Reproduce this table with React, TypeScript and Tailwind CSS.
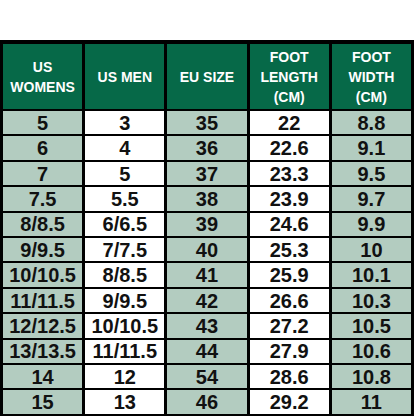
const headers = [
  ['US', 'WOMENS'],
  ['US MEN'],
  ['EU SIZE'],
  ['FOOT', 'LENGTH', '(CM)'],
  ['FOOT', 'WIDTH', '(CM)'],
];

const rows = [
  ['5', '3', '35', '22', '8.8'],
  ['6', '4', '36', '22.6', '9.1'],
  ['7', '5', '37', '23.3', '9.5'],
  ['7.5', '5.5', '38', '23.9', '9.7'],
  ['8/8.5', '6/6.5', '39', '24.6', '9.9'],
  ['9/9.5', '7/7.5', '40', '25.3', '10'],
  ['10/10.5', '8/8.5', '41', '25.9', '10.1'],
  ['11/11.5', '9/9.5', '42', '26.6', '10.3'],
  ['12/12.5', '10/10.5', '43', '27.2', '10.5'],
  ['13/13.5', '11/11.5', '44', '27.9', '10.6'],
  ['14', '12', '54', '28.6', '10.8'],
  ['15', '13', '46', '29.2', '11'],
];

export default function App() {
  return (
    <div className="w-[416px] h-[416px] bg-white overflow-hidden font-['Liberation_Sans',Arial,sans-serif]">
      <div className="mt-[40px] w-[414px] bg-black pt-[4px] pb-[2px] px-[3px]">
        <div className="grid grid-cols-5 gap-x-[3px] gap-y-[2px] grid-rows-[65px_repeat(12,23.42px)]">
          {headers.map((lines, i) => (
            <div
              key={i}
              className="bg-[#066948] text-white font-bold text-[14px] leading-[20px] flex flex-col items-center justify-center text-center"
            >
              {lines.map((l) => (
                <span key={l}>{l}</span>
              ))}
            </div>
          ))}
          {rows.map((row, r) =>
            row.map((cell, c) => (
              <div
                key={`${r}-${c}`}
                className={`flex items-center justify-center text-[20px] font-bold text-[#111] leading-none ${
                  c === 1 || c === 3 ? 'bg-white' : 'bg-[#b3ccc0]'
                }`}
              >
                {cell}
              </div>
            ))
          )}
        </div>
      </div>
    </div>
  );
}
